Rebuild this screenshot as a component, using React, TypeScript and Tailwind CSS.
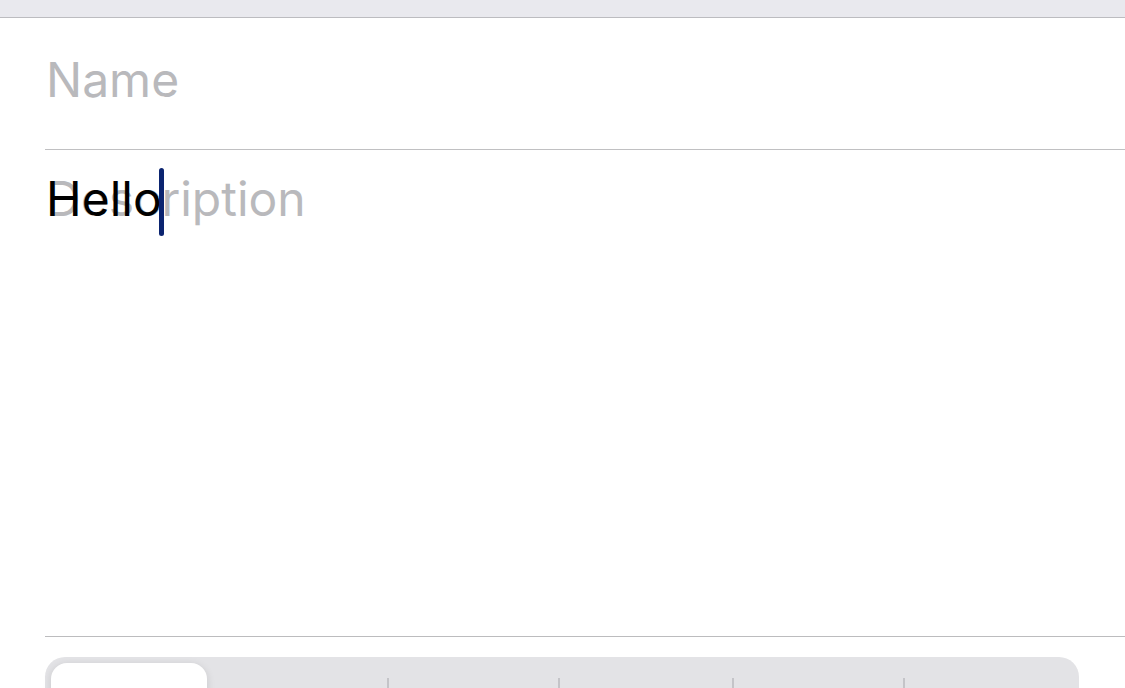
import React from "react";

export default function App() {
  const font = { fontFamily: 'Inter, "Liberation Sans", Arial, sans-serif' };
  return (
    <div className="w-[1125px] h-[688px] overflow-hidden bg-white" style={font}>
      <div className="h-[18px] bg-[#e9e9ee] border-b border-[#bcbcc0]" />
      <div className="pl-[45px]">
        <div className="h-[132px] border-b border-[#c0c0c2] pt-[38px] pl-[1px]">
          <div className="text-[48px] leading-none text-[#b9b9bc]">Name</div>
        </div>
        <div className="relative h-[487px] border-b border-[#bcbcbe] pt-[25px] pl-[1px]">
          <div className="relative text-[48px] leading-none">
            <span className="absolute left-0 top-0 text-[#b9b9bc]">Description</span>
            <span className="relative text-black">Hello</span>
          </div>
          <div className="absolute left-[114px] top-[18px] w-[5px] h-[68px] rounded-full bg-[#0b2470]" />
        </div>
      </div>
      <div className="pt-[20px] pl-[45px] pr-[46px]">
        <div className="h-[60px] rounded-[20px] bg-[#e3e3e6] pt-[6px] px-[6px] flex">
          <div className="w-[156px] h-[60px] rounded-[16px] bg-white shadow-[0_2px_8px_rgba(0,0,0,0.12)]" />
          <div className="flex-1 flex">
            <div className="w-[180px]" />
            <div className="w-[171px] border-l-2 border-[#c4c4c8] mt-[15px]" />
            <div className="w-[174px] border-l-2 border-[#c4c4c8] mt-[15px]" />
            <div className="w-[171px] border-l-2 border-[#c4c4c8] mt-[15px]" />
            <div className="flex-1 border-l-2 border-[#c4c4c8] mt-[15px]" />
          </div>
        </div>
      </div>
    </div>
  );
}
